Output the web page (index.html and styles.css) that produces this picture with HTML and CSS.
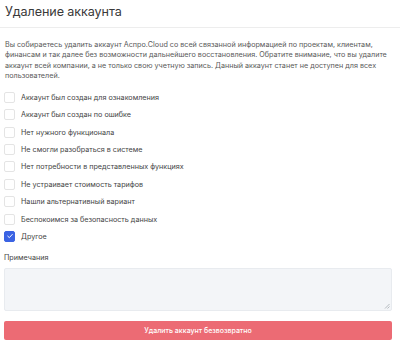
FILE: index.html
```html
<!DOCTYPE html>
<html lang="ru">
<head>
<meta charset="utf-8">
<link rel="stylesheet" href="styles.css">
</head>
<body>
<div class="page">
  <div class="header"><h1 class="title">Удаление аккаунта</h1></div>
  <div class="content">
    <p class="intro">Вы собираетесь удалить аккаунт Аспро.Cloud со всей связанной информацией по проектам, клиентам, финансам и так далее без возможности дальнейшего восстановления. Обратите внимание, что вы удалите аккаунт всей компании, а не только свою учетную запись. Данный аккаунт станет не доступен для всех пользователей.</p>
    <ul class="reasons">
      <li class="reason"><span class="box"></span><span class="label">Аккаунт был создан для ознакомления</span></li>
      <li class="reason"><span class="box"></span><span class="label">Аккаунт был создан по ошибке</span></li>
      <li class="reason"><span class="box"></span><span class="label">Нет нужного функционала</span></li>
      <li class="reason"><span class="box"></span><span class="label">Не смогли разобраться в системе</span></li>
      <li class="reason"><span class="box"></span><span class="label">Нет потребности в представленных функциях</span></li>
      <li class="reason"><span class="box"></span><span class="label">Не устраивает стоимость тарифов</span></li>
      <li class="reason"><span class="box"></span><span class="label">Нашли альтернативный вариант</span></li>
      <li class="reason"><span class="box"></span><span class="label">Беспокоимся за безопасность данных</span></li>
      <li class="reason"><span class="box checked"><svg viewBox="0 0 10 10" width="8" height="8"><path d="M2.2 5.2 L4.2 7 L7.9 3" fill="none" stroke="#fff" stroke-width="1.2" stroke-linecap="round" stroke-linejoin="round"/></svg></span><span class="label">Другое</span></li>
    </ul>
    <div class="notes-label">Примечания</div>
    <div class="notes"><svg class="grip" viewBox="0 0 6 6" width="6" height="6"><path d="M5.5 1 L1 5.5 M5.5 3.5 L3.5 5.5" stroke="#9aa0a8" stroke-width="0.7"/></svg></div>
    <button class="delete">Удалить аккаунт безвозвратно</button>
  </div>
</div>
</body>
</html>
```
FILE: styles.css
```css
* { box-sizing: border-box; }
html, body { margin: 0; padding: 0; background: #fff; }
body { font-family: Inter, "Noto Sans", sans-serif; color: #444; }
.page { width: 400px; }
.header {
  padding: 4px 5px 0;
  height: 28px;
  border-bottom: 1px solid #ededed;
}
.title {
  margin: 0;
  font-size: 12.6px;
  letter-spacing: -0.1px;
  line-height: 16px;
  font-weight: 400;
  color: #3a3a3a;
}
.content { padding: 12px 8px 0 4px; }
.intro {
  margin: 0 0 0 1px;
  font-size: 7.2px;
  line-height: 10.4px;
  color: #595959;
}
.reasons {
  list-style: none;
  margin: 7px 0 0;
  padding: 0;
}
.reason {
  display: flex;
  align-items: center;
  height: 17.4px;
  gap: 6px;
}
.box {
  width: 11px;
  height: 11px;
  border: 1px solid #e4e4e4;
  border-radius: 2px;
  background: #fff;
  display: flex;
  align-items: center;
  justify-content: center;
  flex: none;
}
.box.checked { background: #3b63e3; border-color: #3b63e3; }
.label { font-size: 7.2px; color: #444; }
.notes-label {
  margin-top: 8px;
  font-size: 7.2px;
  color: #444;
}
.notes {
  position: relative;
  margin-top: 6px;
  height: 43px;
  background: #f3f5f8;
  border: 1px solid #e8ebef;
  border-radius: 2px;
}
.grip { position: absolute; right: 1px; bottom: 1px; }
.delete {
  display: block;
  width: 100%;
  margin-top: 10px;
  height: 19px;
  border: none;
  border-radius: 2px;
  background: #ec6b74;
  color: #fff;
  font-family: Inter, "Noto Sans", sans-serif;
  font-size: 7px;
  font-weight: 500;
  padding: 0;
}
```
